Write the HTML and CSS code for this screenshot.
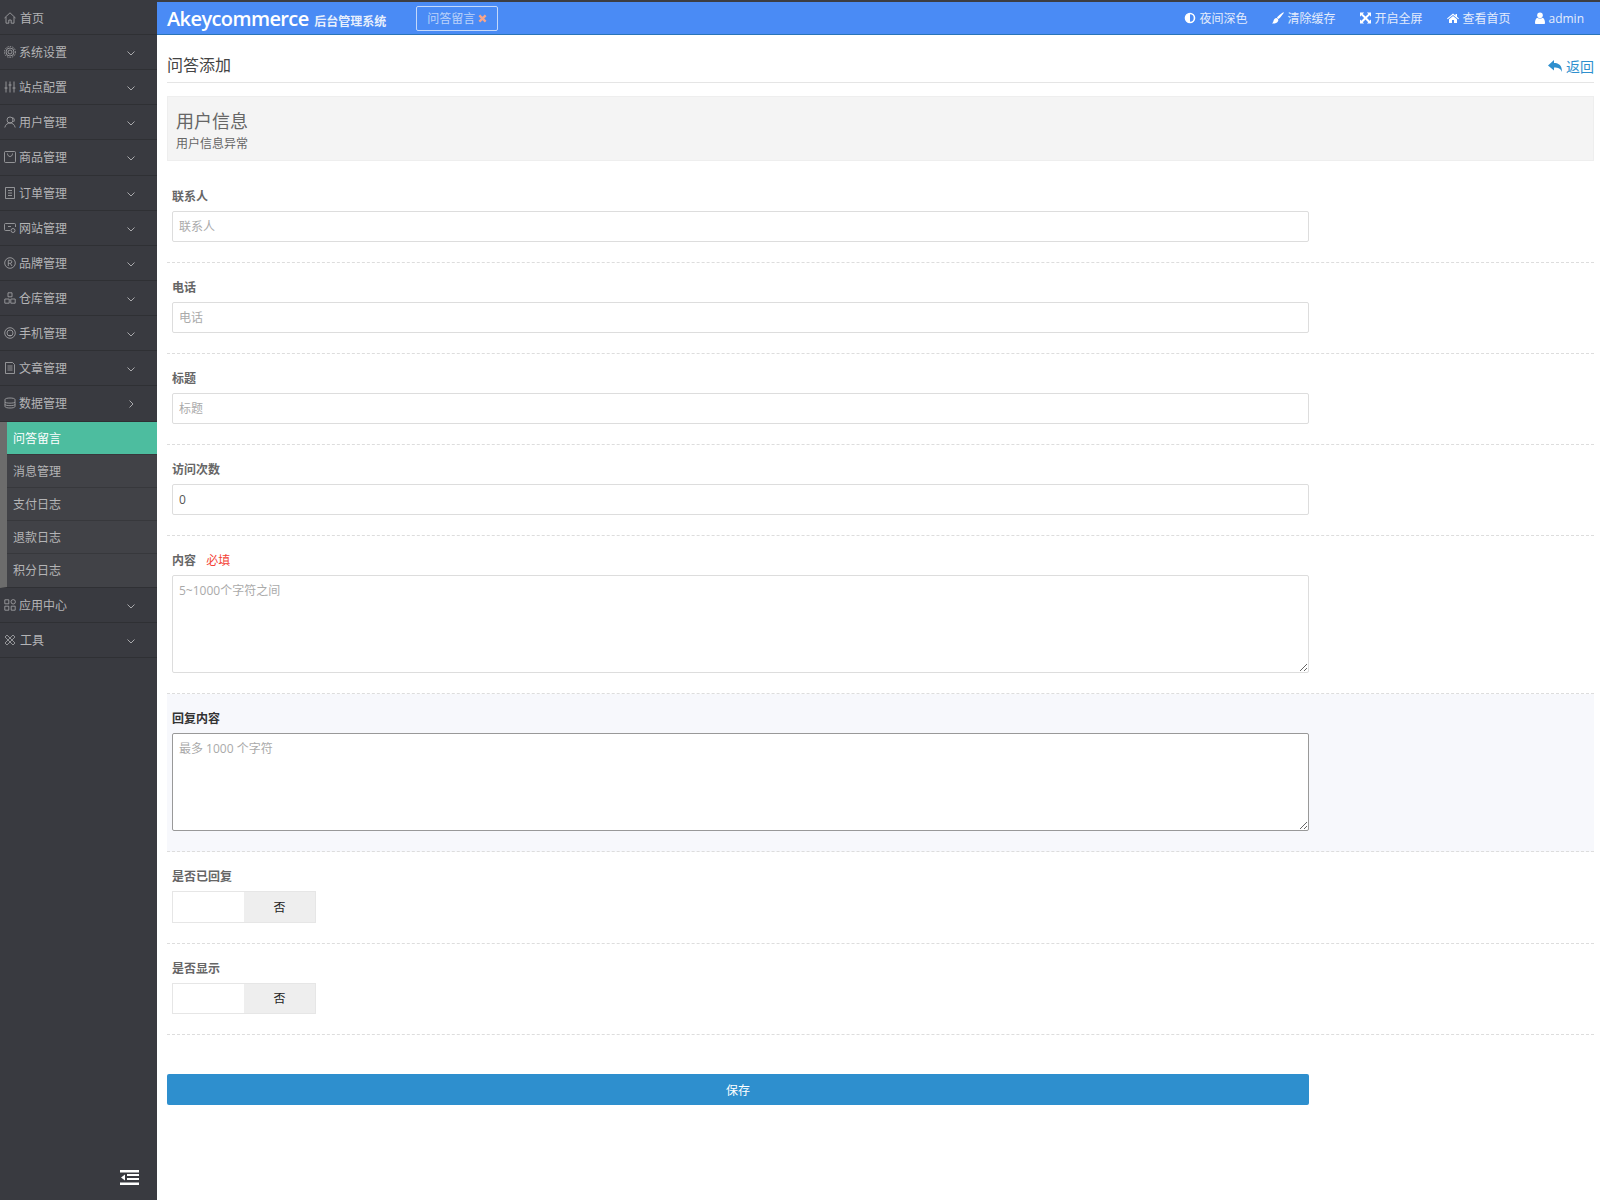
FILE: index.html
```html
<!DOCTYPE html>
<html lang="zh-CN">
<head>
    <meta charset="UTF-8">
    <title>问答添加</title>
    <link rel="stylesheet" href="styles.css">
</head>
<body>
    <aside class="sidebar">
        <a class="menu-home"><svg class="menu-icon" viewBox="0 0 12 12"><path d="M.5 6 6 .8 11.500 6M2 5v6.200h2.800V8h2.400v3.200H10V5"/></svg>首页</a>
        <a class="menu-item"><svg class="menu-icon" viewBox="0 0 12 12"><circle cx="6" cy="6" r="2"/><circle cx="6" cy="6" r="4"/><circle cx="6" cy="6" r="5.500" stroke-dasharray="1.500 1"/></svg>系统设置<svg class="chevron" viewBox="0 0 8 5"><path d="M.5.500 4 4 7.500.5"/></svg></a>
        <a class="menu-item"><svg class="menu-icon" viewBox="0 0 12 12"><path d="M2 .5v11M6 .5v11M10 .5v11M.5 7h3M4.500 4h3M8.500 7h3"/></svg>站点配置<svg class="chevron" viewBox="0 0 8 5"><path d="M.5.500 4 4 7.500.5"/></svg></a>
        <a class="menu-item"><svg class="menu-icon" viewBox="0 0 12 12"><circle cx="6" cy="4" r="3"/><path d="M.8 11.500C1.500 8.500 3.500 7 6 7s4.500 1.500 5.200 4.500M8.500 1.500c2 .5 2.500 3 1 4.500"/></svg>用户管理<svg class="chevron" viewBox="0 0 8 5"><path d="M.5.500 4 4 7.500.5"/></svg></a>
        <a class="menu-item"><svg class="menu-icon" viewBox="0 0 12 12"><path d="M1.500.5h9a1 1 0 0 1 1 1v9a1 1 0 0 1-1 1h-9a1 1 0 0 1-1-1v-9a1 1 0 0 1 1-1zM3.500 2.500c0 4 5 4 5 0"/></svg>商品管理<svg class="chevron" viewBox="0 0 8 5"><path d="M.5.500 4 4 7.500.5"/></svg></a>
        <a class="menu-item"><svg class="menu-icon" viewBox="0 0 12 12"><path d="M1.500.5h9v11h-9zM4 3.500h4M4 6h4M4 8.500h4"/></svg>订单管理<svg class="chevron" viewBox="0 0 8 5"><path d="M.5.500 4 4 7.500.5"/></svg></a>
        <a class="menu-item"><svg class="menu-icon" viewBox="0 0 12 12"><path d="M6 8.500H1.500a1 1 0 0 1-1-1v-5a1 1 0 0 1 1-1h9a1 1 0 0 1 1 1V5M4 4.500h3"/><circle cx="9" cy="8.500" r="2"/></svg>网站管理<svg class="chevron" viewBox="0 0 8 5"><path d="M.5.500 4 4 7.500.5"/></svg></a>
        <a class="menu-item"><svg class="menu-icon" viewBox="0 0 12 12"><circle cx="6" cy="6" r="5.300"/><path d="M4.300 9V3.300h2a1.500 1.500 0 0 1 0 3h-2M6.300 6.300 8 9"/></svg>品牌管理<svg class="chevron" viewBox="0 0 8 5"><path d="M.5.500 4 4 7.500.5"/></svg></a>
        <a class="menu-item"><svg class="menu-icon" viewBox="0 0 12 12"><path d="M4 .8h4v4H4zM.8 7h4.400v4.200H.8zM6.800 7h4.400v4.200H6.800z"/></svg>仓库管理<svg class="chevron" viewBox="0 0 8 5"><path d="M.5.500 4 4 7.500.5"/></svg></a>
        <a class="menu-item"><svg class="menu-icon" viewBox="0 0 12 12"><circle cx="6" cy="6" r="5.300"/><circle cx="6" cy="6" r="3"/><path d="M4.500 8.500h3"/></svg>手机管理<svg class="chevron" viewBox="0 0 8 5"><path d="M.5.500 4 4 7.500.5"/></svg></a>
        <a class="menu-item"><svg class="menu-icon" viewBox="0 0 12 12"><path d="M1.500.5h7l2 2v9h-9zM3.500 4h5M3.500 6h5M3.500 8h5"/></svg>文章管理<svg class="chevron" viewBox="0 0 8 5"><path d="M.5.500 4 4 7.500.5"/></svg></a>
        <a class="menu-item"><svg class="menu-icon" viewBox="0 0 12 12"><path d="M1 2.500C1 .5 11 .5 11 2.500v7c0 2-10 2-10 0zM1 5c0 1.500 10 1.500 10 0M1 7.500c0 1.500 10 1.500 10 0"/></svg>数据管理<svg class="chevron chevron-right" viewBox="0 0 5 8"><path d="M.5.500 4 4 .5 7.500"/></svg></a>
        <div class="submenu">
            <a class="submenu-item active">问答留言</a>
            <a class="submenu-item">消息管理</a>
            <a class="submenu-item">支付日志</a>
            <a class="submenu-item">退款日志</a>
            <a class="submenu-item">积分日志</a>
        </div>
        <a class="menu-item"><svg class="menu-icon" viewBox="0 0 12 12"><path d="M.8.800h4v4h-4zM.8 7.200h4v4h-4zM7.200 7.200h4v4h-4z"/><circle cx="9.200" cy="2.800" r="2.200"/></svg>应用中心<svg class="chevron" viewBox="0 0 8 5"><path d="M.5.500 4 4 7.500.5"/></svg></a>
        <a class="menu-item"><svg class="menu-icon" viewBox="0 0 12 12"><path d="M1 3 3 1l8 8-2 2zM11 3 9 1 1 9l2 2z"/></svg><span class="tool-label">工具</span><svg class="chevron" viewBox="0 0 8 5"><path d="M.5.500 4 4 7.500.5"/></svg></a>
        <div class="sidebar-toggle">
            <svg viewBox="0 0 19 15" width="19" height="15"><path fill="#fff" d="M0 0h19v2.500H0zM7 4h12v2H7zM7 8h12v2H7zM0 12.500h19V15H0zM5 4.500v6L1 7.500z"/></svg>
        </div>
    </aside>

    <div class="main">
        <header class="topbar">
            <div class="brand">Akeycommerce <small>后台管理系统</small></div>
            <div class="tab">问答留言 <svg viewBox="0 0 10 10" width="9" height="9"><path d="M1.500 1.500l7 7M8.500 1.500l-7 7"/></svg></div>
            <nav class="topnav">
                <a><svg viewBox="0 0 12 12" width="12" height="12"><circle cx="6" cy="6" r="4.500" fill="none" stroke="#fff" stroke-width="1.600"/><path fill="#fff" d="M6 1.500a4.500 4.500 0 0 0 0 9z"/></svg>夜间深色</a>
                <a><svg viewBox="0 0 12 12" width="12" height="12"><path fill="#fff" d="M11.800.3c.4.500-3.500 5.200-5.300 6.800L4.900 5.500C6.500 3.700 11.200-.2 11.800.3zM4.300 6c1.200.2 2 1 2 2.200C6.200 10.400 3 12 0 11.500c1.200-.7 1.200-1.800 1.700-3.200C2.100 7 3 6 4.300 6z"/></svg>清除缓存</a>
                <a><svg viewBox="0 0 12 12" width="11" height="12"><path fill="#fff" d="M0 0h4.500L3 1.500 6 4.400 9 1.500 7.500 0H12v4.500L10.500 3 7.600 6l2.900 3L12 7.500V12H7.500L9 10.500 6 7.600 3 10.500 4.500 12H0V7.500L1.500 9l2.900-3-2.900-3L0 4.500z"/></svg>开启全屏</a>
                <a><svg viewBox="0 0 12 12" width="12" height="12"><path fill="#fff" d="M6 1.500 0 6.500l.7.800L6 3l5.300 4.300.7-.8-2-1.700V2H8.500v1.600zM2 7.200 6 4l4 3.200V11H7V8H5v3H2z"/></svg>查看首页</a>
                <a><svg viewBox="0 0 10 12" width="10" height="12"><circle cx="5" cy="3.200" r="2.800" fill="#fff"/><path fill="#fff" d="M0 11c0-3 1-4.800 2.500-5.300C3.200 6.300 4 6.600 5 6.600s1.800-.3 2.500-.9C9 6.200 10 8 10 11c0 .6-.5 1-1 1H1c-.5 0-1-.4-1-1z"/></svg>admin</a>
            </nav>
        </header>

        <div class="content">
            <div class="page-title">
                <h1>问答添加</h1>
                <a class="back"><svg viewBox="0 0 14 12" width="14" height="12"><path fill="#2e8fce" d="M6 0v3c5 0 8 2.500 8 9-1.500-3.500-3.500-4.500-8-4.500v3L0 5.500z"/></svg>返回</a>
            </div>

            <div class="user-info">
                <h2>用户信息</h2>
                <p>用户信息异常</p>
            </div>

            <form>
                <div class="form-row">
                    <label>联系人</label>
                    <input class="field" type="text" placeholder="联系人">
                </div>
                <div class="form-row">
                    <label>电话</label>
                    <input class="field" type="text" placeholder="电话">
                </div>
                <div class="form-row">
                    <label>标题</label>
                    <input class="field" type="text" placeholder="标题">
                </div>
                <div class="form-row">
                    <label>访问次数</label>
                    <input class="field" type="text" value="0">
                </div>
                <div class="form-row">
                    <label>内容 <em>必填</em></label>
                    <textarea class="field" placeholder="5~1000个字符之间"></textarea>
                </div>
                <div class="form-row form-row-focus">
                    <label>回复内容</label>
                    <textarea class="field" placeholder="最多 1000 个字符"></textarea>
                </div>
                <div class="form-row">
                    <label>是否已回复</label>
                    <div class="switch"><span></span><span class="switch-off">否</span></div>
                </div>
                <div class="form-row">
                    <label>是否显示</label>
                    <div class="switch"><span></span><span class="switch-off">否</span></div>
                </div>
                <button class="save" type="button">保存</button>
            </form>
        </div>
    </div>
</body>
</html>
```

FILE: styles.css
```css
* {
    box-sizing: border-box;
}
body {
    margin: 0;
    display: flex;
    min-height: 1200px;
    font-family: "Open Sans", "Noto Sans CJK SC", sans-serif;
    font-size: 12px;
    color: #555;
    background-color: #fff;
}
.sidebar {
    width: 157px;
    height: 1200px;
    flex-shrink: 0;
    display: flex;
    flex-direction: column;
    background-color: #393a40;
    color: #b4b4b6;
}
.menu-home {
    height: 35px;
    padding-top: 2px;
    display: flex;
    align-items: center;
    border-bottom: 1px solid #2f3034;
}
.menu-item {
    height: 35.15px;
    display: flex;
    align-items: center;
    border-bottom: 1px solid #2f3034;
    position: relative;
}
.menu-icon {
    width: 12px;
    height: 12px;
    margin: 0 3px 0 4px;
    fill: none;
    stroke: #a9a9ac;
    stroke-width: 0.8;
}
.menu-home .menu-icon {
    margin-right: 4px;
}
.tool-label {
    margin-left: 1px;
}
.chevron {
    position: absolute;
    left: 127px;
    top: 16px;
    width: 8px;
    height: 5px;
    fill: none;
    stroke: #a9a9ac;
}
.chevron-right {
    left: 129px;
    top: 14px;
    width: 5px;
    height: 8px;
}
.submenu {
    border-left: 7px solid #6c6c6c;
    border-bottom: 1px solid #2f3034;
    background-color: #414247;
}
.submenu-item {
    height: 33px;
    padding-left: 6px;
    display: flex;
    align-items: center;
    border-bottom: 1px solid #37383c;
}
.submenu-item:last-child {
    border-bottom: none;
}
.submenu-item.active {
    background-color: #4dbd9f;
    color: #fff;
}
.sidebar-toggle {
    margin-top: auto;
    padding: 0 18px 15px 0;
    display: flex;
    justify-content: flex-end;
}
.main {
    flex: 1;
    min-width: 0;
}
.topbar {
    height: 35px;
    display: flex;
    align-items: center;
    padding: 0 16px 0 10px;
    background-color: #4a8bf5;
    border-top: 2px solid #3c3d42;
    border-bottom: 1px solid #2a74b8;
    color: #fff;
}
.brand {
    font-size: 20px;
    font-weight: 600;
    letter-spacing: -0.6px;
    white-space: nowrap;
}
.brand small {
    font-size: 12px;
    font-weight: 700;
    letter-spacing: 0;
    margin-left: 1px;
    color: #e8effc;
}
.tab {
    margin-left: 30px;
    width: 82px;
    height: 25px;
    display: flex;
    align-items: center;
    justify-content: center;
    gap: 3px;
    border: 1px solid #c4d8fa;
    border-radius: 2px;
    color: #bdd3f9;
}
.tab svg {
    fill: none;
    stroke: #f7a58a;
    stroke-width: 2.6;
}
.topnav {
    margin-left: auto;
    display: flex;
    gap: 25px;
    color: #e4ecfb;
}
.topnav a {
    display: flex;
    align-items: center;
    gap: 3px;
}
.content {
    padding: 0 6px 0 10px;
}
.page-title {
    height: 48px;
    display: flex;
    justify-content: space-between;
    align-items: center;
    border-bottom: 1px solid #e5e5e5;
}
.page-title h1 {
    margin: 11px 0 0;
    font-size: 16px;
    font-weight: 400;
    color: #444;
}
.back {
    margin-top: 14px;
    display: flex;
    align-items: center;
    gap: 4px;
    font-size: 14px;
    color: #2e8fce;
}
.user-info {
    height: 65px;
    margin: 13px 0 11px;
    padding: 12px 8px 0;
    background-color: #f4f4f4;
    border: 1px solid #eee;
}
.user-info h2 {
    margin: 0;
    font-size: 18px;
    font-weight: 400;
    line-height: 24px;
    color: #666;
}
.user-info p {
    margin: 2px 0 0;
    line-height: 18px;
    color: #666;
}
.form-row {
    padding: 15px 5px 20px;
    border-bottom: 1px dashed #ddd;
}
.form-row label {
    display: block;
    height: 20px;
    margin-bottom: 4px;
    line-height: 20px;
    font-weight: 700;
    color: #666;
}
.form-row em {
    margin-left: 7px;
    font-style: normal;
    font-weight: 400;
    color: #f44336;
}
.field {
    display: block;
    width: 1137px;
    height: 31px;
    padding: 0 6px;
    border: 1px solid #ddd;
    border-radius: 2px;
    outline: none;
    font-family: inherit;
    font-size: 12px;
    color: #555;
    background-color: #fff;
}
.field::placeholder {
    color: #aaa;
}
textarea.field {
    height: 98px;
    padding: 6px;
    line-height: 18px;
}
.form-row-focus {
    background-color: #f7f8fc;
}
.form-row-focus label {
    color: #333;
}
.form-row-focus .field {
    border-color: #999;
}
.switch {
    width: 144px;
    height: 31.5px;
    display: flex;
    border: 1px solid #e6e6e6;
    background-color: #fff;
}
.switch span {
    flex: 1;
}
.switch .switch-off {
    display: flex;
    align-items: center;
    justify-content: center;
    background-color: #eee;
    color: #222;
}
.save {
    display: block;
    width: 1142px;
    height: 31px;
    margin-top: 39px;
    padding: 0;
    border: none;
    border-radius: 2px;
    background-color: #2e8fce;
    color: #fff;
    font-family: inherit;
    font-size: 12px;
}
```
